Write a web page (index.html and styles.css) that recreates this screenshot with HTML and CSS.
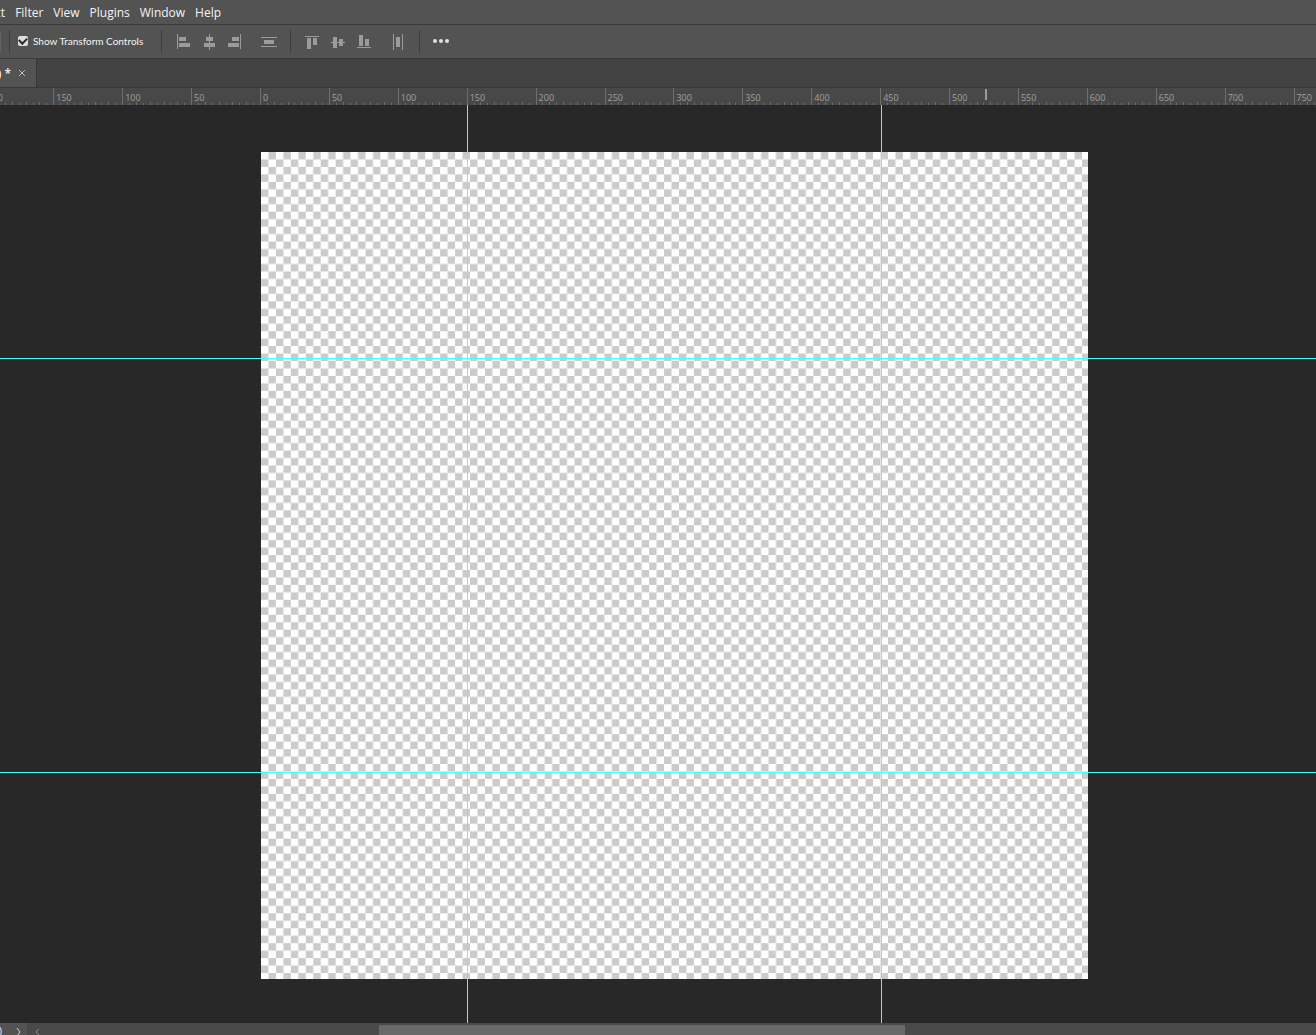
FILE: index.html
```
<!DOCTYPE html>
<html lang="en">
<head>
<meta charset="utf-8">
<title>Image editor</title>
<link rel="stylesheet" href="styles.css">
</head>
<body>
<nav class="menubar" aria-label="Main menu">
  <button class="menu">Select</button>
  <button class="menu">Filter</button>
  <button class="menu">View</button>
  <button class="menu">Plugins</button>
  <button class="menu">Window</button>
  <button class="menu">Help</button>
</nav>
<div class="options" role="toolbar" aria-label="Move tool options">
  <span class="field-end"></span>
  <span class="rule"></span>
  <label class="check"><input type="checkbox" checked><span>Show Transform Controls</span></label>
  <span class="rule"></span>
  <div class="group">
    <button class="tool" aria-label="Align left edges"><svg width="16" height="16"><path d="M1 0h1v15H1zM3 3h7v4H3zM3 9h11v4H3z"/></svg></button>
    <button class="tool" aria-label="Align horizontal centers"><svg width="16" height="16"><path d="M7 0h1v16H7zM4 3h7v4H4zM2 9h11v4H2z"/></svg></button>
    <button class="tool" aria-label="Align right edges"><svg width="16" height="16"><path d="M12 0h1v15h-1zM4 3h7v4H4zM0 9h11v4H0z"/></svg></button>
  </div>
  <button class="tool spread" aria-label="Distribute vertically"><svg width="16" height="16"><path d="M0 3h16v1H0zM3 6h10v4H3zM0 12h16v1H0z"/></svg></button>
  <span class="rule"></span>
  <div class="group">
    <button class="tool" aria-label="Align top edges"><svg width="16" height="16"><path d="M1 2h14v1H1zM3 4h4v11H3zM9 4h4v7H9z"/></svg></button>
    <button class="tool" aria-label="Align vertical centers"><svg width="16" height="16"><path d="M1 8h14v1H1zM3 3h4v11H3zM9 5h4v7H9z"/></svg></button>
    <button class="tool" aria-label="Align bottom edges"><svg width="16" height="16"><path d="M1 13h14v1H1zM3 1h4v11H3zM9 5h4v7H9z"/></svg></button>
  </div>
  <button class="tool distribute" aria-label="Distribute horizontally"><svg width="16" height="16"><path d="M3 0h1v16H3zM6 3h4v10H6zM12 0h1v16h-1z"/></svg></button>
  <span class="rule"></span>
  <button class="tool more" aria-label="More options"><svg width="16" height="16"><circle cx="2" cy="7" r="2"/><circle cx="8" cy="7" r="2"/><circle cx="14" cy="7" r="2"/></svg></button>
</div>
<div class="tabs">
  <div class="tab"><span class="tab-name">(RGB/8) *</span><button class="close" aria-label="Close document"><svg width="8" height="8"><path d="M1 1l6 6M7 1l-6 6"/></svg></button></div>
</div>
<div class="ruler" id="ruler"><span class="pointer"></span></div>
<main class="stage">
  <div class="artboard">
    <svg class="checker" viewBox="0 0 554 554" aria-hidden="true">
      <defs><pattern id="cells" width="10" height="10" patternUnits="userSpaceOnUse"><path fill="#fff" d="M0 0h10v10H0z"/><path fill="#cbcbcb" d="M5 0h5v5H5zM0 5h5v5H0z"/></pattern></defs>
      <rect width="554" height="554" fill="url(#cells)"/>
    </svg>
  </div>
  <span class="guide column first"></span>
  <span class="guide column second"></span>
  <span class="guide row first"></span>
  <span class="guide row second"></span>
</main>
<footer class="status">
  <div class="info"><span>(72 ppi)</span><button class="arrow" aria-label="Status options"><svg width="6" height="10"><path d="M1 1l3 4-3 4"/></svg></button></div>
  <button class="arrow back" aria-label="Scroll left"><svg width="6" height="10"><path d="M5 2L2 5l3 3"/></svg></button>
  <div class="track"><div class="thumb"></div></div>
</footer>
<script src="ruler.js"></script>
</body>
</html>
```
FILE: styles.css
```
:root {
  --unit: calc(827px / 600);
  --text: #f4f4f4;
  --icon: #9b9b9b;
}
* { box-sizing: border-box; }
body {
  margin: 0;
  height: 100vh;
  display: flex;
  flex-direction: column;
  overflow: hidden;
  background: #282828;
  color: var(--text);
  font-family: "Open Sans", sans-serif;
  font-size: 12px;
}
button {
  border: 0;
  padding: 0;
  background: none;
  color: inherit;
  font: inherit;
}
svg { display: block; }
.menubar {
  flex: none;
  display: flex;
  gap: 10px;
  height: 25px;
  padding-top: 1px;
  background: #535353;
  border-bottom: 1px solid #3b3b3b;
}
.menu { line-height: 22px; }
.menu:first-child { margin-left: -28px; }
.options {
  flex: none;
  display: flex;
  align-items: center;
  height: 34px;
  background: #535353;
  border-bottom: 1px solid #3b3b3b;
}
.field-end {
  width: 1px;
  height: 20px;
  margin-right: 8px;
  background: #636363;
}
.rule {
  width: 1px;
  height: 23px;
  background: #3d3d3d;
}
.check {
  display: flex;
  align-items: center;
  gap: 5px;
  width: 151px;
  padding: 0 0 2px 8px;
  font-family: Lato, sans-serif;
  font-size: 10px;
  white-space: nowrap;
}
.check input {
  appearance: none;
  display: grid;
  place-items: center;
  width: 10px;
  height: 10px;
  margin: 0;
  border-radius: 2px;
  background: #dcdcdc;
}
.check input:checked::after {
  content: "";
  width: 6px;
  height: 4px;
  margin-bottom: 2px;
  border: solid #2b2b2b;
  border-width: 0 0 2px 2px;
  rotate: -45deg;
}
.group {
  display: flex;
  gap: 10px;
  margin-left: 14px;
}
.group ~ .rule + .group { margin-left: 13px; }
.tool svg { fill: var(--icon); }
.spread,
.distribute { margin: 0 13px 0 17px; }
.distribute { margin-left: 18px; }
.more { margin-left: 13px; }
.more svg { fill: #e0e0e0; }
.tabs {
  flex: none;
  display: flex;
  height: 29px;
  background: #424242;
  border-bottom: 1px solid #383838;
}
.tab {
  display: flex;
  align-items: center;
  justify-content: flex-end;
  gap: 7px;
  width: 37px;
  padding-right: 10px;
  background: #535353;
  border-right: 1px solid #383838;
}
.tab-name {
  font-size: 12px;
  font-weight: 600;
  white-space: nowrap;
}
.close svg {
  fill: none;
  stroke: #bdbdbd;
}
.ruler {
  flex: none;
  position: relative;
  display: flex;
  height: 17px;
  padding-left: 260px;
  overflow: hidden;
  background: #484848;
  color: #a0a0a0;
  font-size: 9px;
}
.segment {
  flex: none;
  display: flex;
  flex-direction: column;
  width: calc(50 * var(--unit));
  border-left: 1px solid #6e6e6e;
}
.segment.origin { margin-left: calc(-200 * var(--unit)); }
.segment-label {
  height: 14px;
  padding-left: 2px;
  line-height: 19px;
}
.ticks {
  display: flex;
  align-items: flex-end;
  height: 3px;
  margin-left: -1px;
}
.ticks span {
  flex: 1;
  height: 2px;
  border-left: 1px solid #6e6e6e;
}
.ticks span:nth-child(odd) { height: 3px; }
.pointer {
  position: absolute;
  left: 985px;
  top: 1px;
  width: 2px;
  height: 11px;
  background: #9a9a9a;
}
.stage {
  flex: 1;
  min-height: 0;
  position: relative;
  overflow: hidden;
  padding: 47px 0 0 261px;
}
.artboard {
  width: calc(600 * var(--unit));
  height: calc(600 * var(--unit));
}
.checker {
  width: 100%;
  height: 100%;
}
.guide {
  position: absolute;
  background: #4ff;
}
.column {
  top: 0;
  bottom: 0;
  width: 1px;
}
.column.first { left: 467px; }
.column.second { left: 881px; }
.row {
  left: 0;
  right: 0;
  height: 1px;
}
.row.first { top: 253px; }
.row.second { top: 667px; }
.status {
  flex: none;
  display: flex;
  height: 12px;
  background: #4a4a4a;
}
.info {
  display: flex;
  justify-content: flex-end;
  gap: 14px;
  width: 27px;
  height: 17px;
  padding-right: 5px;
  background: #535353;
  font-size: 10px;
  line-height: 17px;
  white-space: nowrap;
}
.arrow { height: 17px; }
.arrow svg {
  fill: none;
  stroke: #d0d0d0;
}
.back { margin-left: 7px; }
.back svg { stroke: #8c8c8c; }
.track {
  flex: 1;
  display: grid;
  grid-template-columns: 339fr 526fr 411fr;
  padding-top: 2px;
}
.thumb {
  grid-column: 2;
  background: #696969;
}
```
FILE: ruler.js
```
const ruler = document.getElementById("ruler");
for (let value = -200; value <= 750; value += 50) {
  const segment = document.createElement("div");
  segment.className = value === -200 ? "segment origin" : "segment";
  const label = document.createElement("span");
  label.className = "segment-label";
  label.textContent = Math.abs(value);
  const ticks = document.createElement("div");
  ticks.className = "ticks";
  for (let i = 0; i < 10; i++) ticks.append(document.createElement("span"));
  segment.append(label, ticks);
  ruler.append(segment);
}
```
